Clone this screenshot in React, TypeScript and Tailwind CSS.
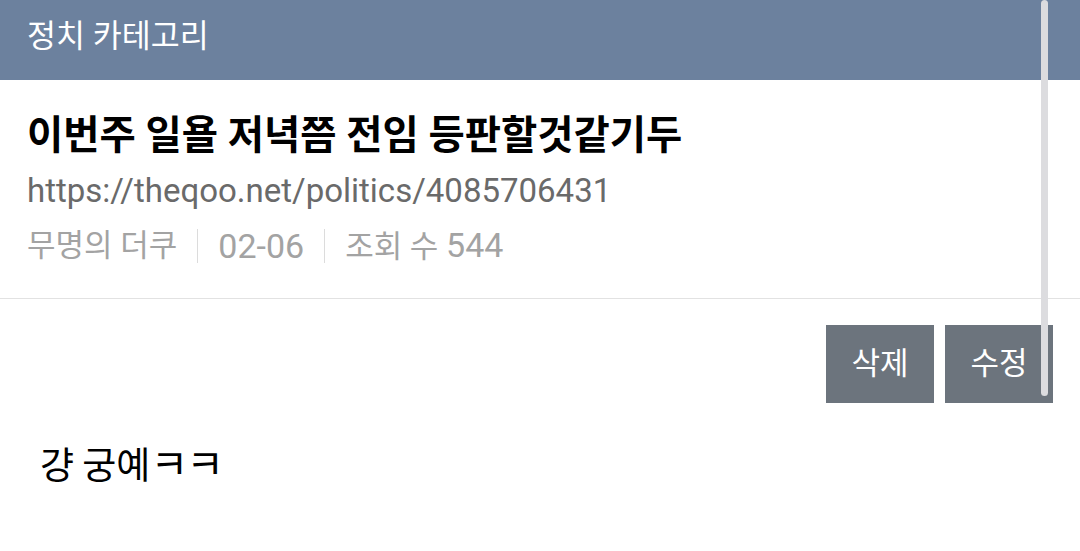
const FONT = "font-['Roboto','Noto_Sans_CJK_KR',sans-serif]";

const Sep = () => <span className="mx-5 inline-block h-[34px] w-px bg-[#dcdcdc] align-middle" />;

export default function App() {
  return (
    <div className={`relative h-[551px] w-[1080px] overflow-hidden bg-white ${FONT}`}>
      <div className="flex h-[80px] items-center bg-[#6c819e] px-[27px] pb-[6px]">
        <h1 className="text-[31.5px] leading-none text-white">정치 카테고리</h1>
      </div>

      <div className="border-b border-[#e2e2e2] px-[27px] pb-[29px] pt-[30px]">
        <h2 className="text-[39.4px] font-bold leading-[52px] text-black">이번주 일욜 저녁쯤 전임 등판할것같기두</h2>
        <p className="mt-[7px] text-[33px] leading-[44px] text-[#6a6a6a]">https://theqoo.net/politics/4085706431</p>
        <div className="mt-[10px] flex items-center text-[31px] leading-[44px] text-[#a3a3a3]">
          <span>무명의 더쿠</span>
          <Sep />
          <span className="text-[34px]">02-06</span>
          <Sep />
          <span>
            조회 수 <span className="text-[34px]">544</span>
          </span>
        </div>
      </div>

      <div className="flex justify-end gap-[11px] pr-[27px] pt-[26px]">
        <button className="h-[78px] w-[108px] bg-[#6c747d] text-[31px] text-white">삭제</button>
        <button className="h-[78px] w-[108px] bg-[#6c747d] text-[31px] text-white">수정</button>
      </div>

      <p className="px-[40px] pt-[36px] font-['Noto_Sans_CJK_KR',sans-serif] text-[37px] leading-[44px] text-black">
        걍 궁예<span className="text-[41px] tracking-[-2px]">ㅋㅋ</span>
      </p>

      <div className="absolute left-[1041px] top-0 h-[396px] w-[7px] rounded-full bg-[#dcdcdf]" />
    </div>
  );
}
